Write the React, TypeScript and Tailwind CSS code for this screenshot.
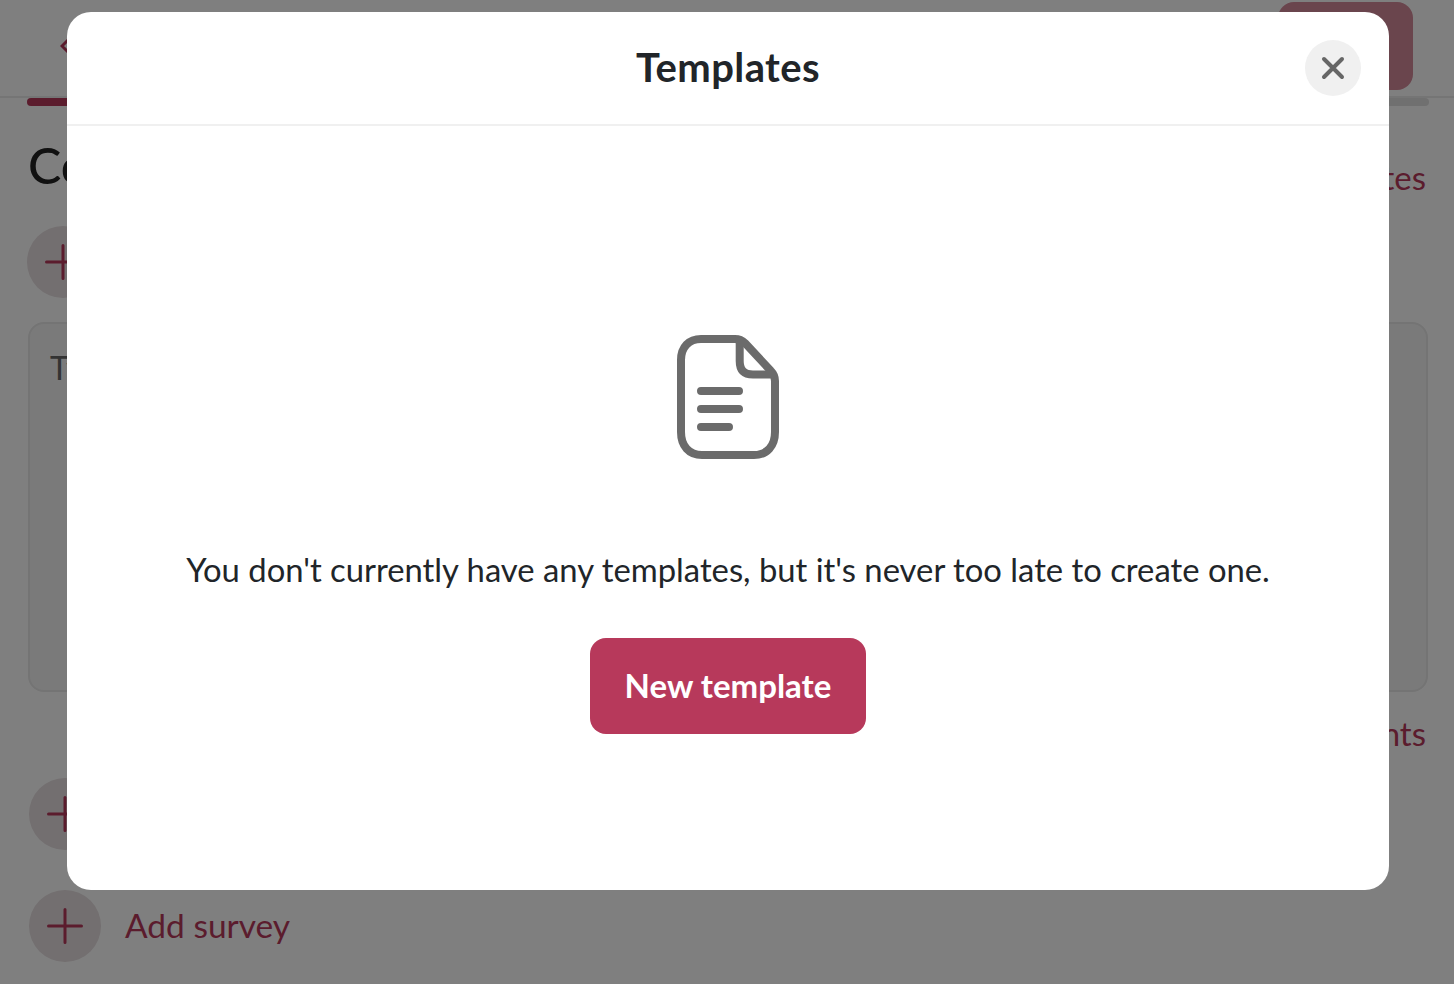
import React from "react";

function Plus() {
  return (
    <svg width="36" height="36" viewBox="0 0 36 36" fill="none" stroke="#b7395b" strokeWidth="3" strokeLinecap="round">
      <path d="M1.5 18H34.5M18 1.5V34.5" />
    </svg>
  );
}

function AddRow({ label, className }: { label: string; className: string }) {
  return (
    <div className={"flex items-center gap-6 " + className}>
      <div className="flex h-[72px] w-[72px] items-center justify-center rounded-full bg-[#e6dee0]">
        <Plus />
      </div>
      <span className="mb-[2px] text-[33.5px] text-[#b7395b]">{label}</span>
    </div>
  );
}

export default function App() {
  return (
    <div className="relative h-[984px] w-full overflow-hidden bg-white font-['Lato','Liberation_Sans',sans-serif]">
      <header className="flex h-[98px] items-start justify-between border-b-2 border-[#eaeaea] pl-[60px] pr-[41px] pt-[2px]">
        <svg className="mt-[36px]" width="14" height="16" viewBox="0 0 14 16" fill="none" stroke="#b7395b" strokeWidth="3">
          <path d="M8 2L2 8L8 14" />
        </svg>
        <div className="h-[88px] w-[135px] rounded-2xl bg-[#d48a9a]" />
      </header>
      <div className="ml-[27px] mr-[25px] h-2 rounded-full bg-[#e0e0e0]">
        <div className="h-2 w-[300px] rounded-full bg-[#b7395b]" />
      </div>
      <div className="flex h-[94px] items-center justify-between pl-[28px] pr-[28px] pt-[26px]">
        <h1 className="mb-[2px] text-[50px] font-medium leading-[66px] text-[#222]">Content</h1>
        <span className="mt-[22px] text-[33px] leading-[40px] text-[#b7395b]">Manage templates</span>
      </div>
      <AddRow label="Add text" className="mt-[26px] pl-[27px]" />
      <div className="ml-[28px] mr-[26px] mt-[24px] h-[370px] rounded-2xl border-2 border-[#e8e8e8] bg-[#f5f5f5] px-5 pt-[20px] text-[32px] text-[#666]">
        Type here
      </div>
      <div className="mt-[20px] px-[28px] text-right text-[33px] leading-[42px] text-[#b7395b]">Attachments</div>
      <AddRow label="Add file" className="mt-[24px] pl-[29px]" />
      <AddRow label="Add survey" className="mt-[40px] pl-[29px]" />

      <div className="absolute inset-0 bg-black/50" />

      <div className="absolute left-[67px] top-[12px] flex h-[878px] w-[1322px] flex-col rounded-[24px] bg-white text-[#212529]">
        <div className="relative flex h-[114px] shrink-0 items-center justify-center border-b-2 border-[#f0f0f0] pb-[2px]">
          <h2 className="text-[40px] font-bold tracking-[0.4px]">Templates</h2>
          <button className="absolute right-[28px] top-[28px] flex h-14 w-14 items-center justify-center rounded-full bg-[#f0f0f0]">
            <svg width="24" height="24" viewBox="0 0 24 24" fill="none" stroke="#666" strokeWidth="4" strokeLinecap="round">
              <path d="M3 3L21 21M21 3L3 21" />
            </svg>
          </button>
        </div>
        <div className="flex flex-col items-center pt-[209px]">
          <svg width="102" height="124" viewBox="0 0 102 124" fill="none" stroke="#6b6b6b" strokeWidth="8" strokeLinecap="round" strokeLinejoin="round">
            <path d="M24 4H58C62 4 65 5 68 8L94 36C97 39 98 42 98 46V97C98 111 90 120 77 120H25C12 120 4 111 4 97V25C4 12 12 4 24 4Z" />
            <path d="M62.700 6V26C62.700 35 67 39.500 76 39.500H95" />
            <path d="M24 56H62M24 74H62M24 92H52" />
          </svg>
          <p className="mt-[89px] text-[32.8px] leading-[44px]">You don't currently have any templates, but it's never too late to create one.</p>
          <button className="mt-[46px] flex h-24 w-[276px] items-center justify-center rounded-2xl bg-[#b7395b] text-[33px] font-bold text-white">
            New template
          </button>
        </div>
      </div>
    </div>
  );
}
